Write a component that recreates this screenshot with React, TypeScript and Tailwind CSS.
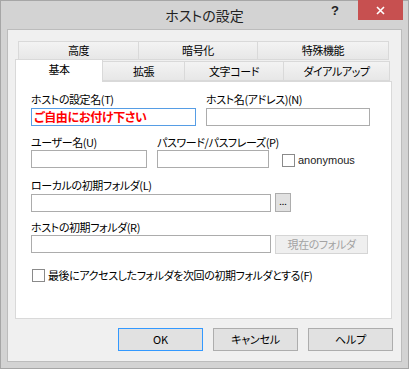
import React from "react";

const Tab: React.FC<{ label: string; w: string; cls?: string }> = ({ label, w, cls }) => (
  <div
    className={`${w} ${cls ?? ""} flex items-center justify-center border border-[#d9d9d9] bg-gradient-to-b from-[#f3f3f3] to-[#e7e7e7] text-[11px] tracking-[-0.4px] leading-none`}
  >
    {label}
  </div>
);

const Field: React.FC<{ w: string; focused?: boolean; children?: React.ReactNode }> = ({ w, focused, children }) => (
  <div
    className={`${w} h-[18px] bg-white border ${
      focused ? "border-[#569de5]" : "border-[#acacac]"
    } flex items-center px-[2px]`}
  >
    {children}
  </div>
);

const Check: React.FC = () => <div className="w-[13px] h-[13px] bg-white border border-[#8a8a8a] shrink-0" />;

const Label: React.FC<{ children: React.ReactNode; cls?: string }> = ({ children, cls }) => (
  <div className={`h-[15px] leading-[15px] text-[11px] tracking-[-0.4px] whitespace-nowrap ${cls ?? ""}`}>{children}</div>
);

const DlgButton: React.FC<{ label: string; primary?: boolean }> = ({ label, primary }) => (
  <button
    className={`w-[85px] h-[23px] bg-[#e1e1e1] border ${
      primary ? "border-[#3399ff]" : "border-[#adadad]"
    } text-[11px] tracking-[-0.2px] leading-none flex items-center justify-center`}
  >
    {label}
  </button>
);

export default function App() {
  return (
    <div className="w-[409px] h-[369px] bg-[#d3d3d3] border border-[#a6a6a6] flex flex-col font-['Noto_Sans_CJK_JP',sans-serif] [font-feature-settings:'palt'] text-black">
      {/* title bar */}
      <div className="h-[28px] flex items-start">
        <div className="w-[78px]" />
        <div className="flex-1 h-[28px] flex items-center justify-center text-[14px] text-[#222]">ホストの設定</div>
        <div className="w-[78px] flex items-start">
          <div className="w-[22px] h-[20px] flex items-center justify-center text-[13px] font-bold text-[#222] font-['Liberation_Sans',sans-serif] -ml-[6px] mr-[12px]">
            ?
          </div>
          <div className="w-[45px] h-[20px] -mt-px bg-[#c75050] flex items-center justify-center">
            <svg width="9" height="9" viewBox="0 0 9 9">
              <path d="M1 1 L8 8 M8 1 L1 8" stroke="#fff" strokeWidth="1.6" />
            </svg>
          </div>
        </div>
      </div>

      {/* client area */}
      <div className="ml-[6px] w-[395px] h-[333px] border border-[#bcbcbc] bg-[#f0f0f0] flex flex-col">
        <div className="ml-[7px] mt-[11px] w-[377px] flex flex-col">
          {/* back row */}
          <div className="ml-[3px] flex">
            <Tab label="高度" w="w-[121px]" cls="h-[19px]" />
            <Tab label="暗号化" w="w-[120px]" cls="h-[19px] -ml-px" />
            <Tab label="特殊機能" w="w-[132px]" cls="h-[19px] -ml-px" />
          </div>
          {/* front row */}
          <div className="flex items-end -mt-px">
            <div className="w-[88px] h-[23px] -mb-px relative z-10 bg-white border border-b-0 border-[#d9d9d9] flex items-center justify-center text-[11px] tracking-[-0.4px] leading-none pb-[3px]">
              基本
            </div>
            <Tab label="拡張" w="w-[83px]" cls="h-[20px] -ml-px" />
            <Tab label="文字コード" w="w-[100px]" cls="h-[20px] -ml-px" />
            <Tab label="ダイアルアップ" w="w-[107px]" cls="h-[20px] -ml-px" />
          </div>

          {/* panel */}
          <div className="h-[238px] bg-white border border-[#d9d9d9] pl-[15px] pt-[10px] flex flex-col">
            {/* row 1 */}
            <div className="flex gap-[10px]">
              <div className="w-[165px] flex flex-col gap-px">
                <Label>ホストの設定名(T)</Label>
                <Field w="w-[165px]" focused>
                  <span className="text-[#ff0000] font-bold text-[12px] tracking-[-0.3px] leading-none">ご自由にお付け下さい</span>
                </Field>
              </div>
              <div className="w-[164px] flex flex-col gap-px">
                <Label>ホスト名(アドレス)(N)</Label>
                <Field w="w-[164px]" />
              </div>
            </div>

            {/* row 2 */}
            <div className="flex gap-[10px] mt-[9px] items-end">
              <div className="w-[116px] flex flex-col">
                <Label>ユーザー名(U)</Label>
                <Field w="w-[116px]" />
              </div>
              <div className="w-[112px] flex flex-col">
                <Label>パスワード/パスフレーズ(P)</Label>
                <Field w="w-[112px]" />
              </div>
              <div className="flex items-center gap-[3px] ml-[3px] mb-px">
                <Check />
                <span className="text-[11px] leading-none font-['Liberation_Sans',sans-serif] text-[#222]">anonymous</span>
              </div>
            </div>

            {/* row 3 */}
            <Label cls="mt-[10px]">ローカルの初期フォルダ(L)</Label>
            <div className="flex items-center gap-[4px]">
              <Field w="w-[240px]" />
              <button className="w-[16px] h-[19px] bg-[#e1e1e1] border border-[#adadad] text-[9px] leading-none flex items-center justify-center pb-[2px]">
                ...
              </button>
            </div>

            {/* row 4 */}
            <Label cls="mt-[8px]">ホストの初期フォルダ(R)</Label>
            <div className="flex items-start gap-[4px]">
              <Field w="w-[240px]" />
              <div className="w-[93px] h-[19px] bg-[#efefef] border border-[#d5d5d5] text-[#a3a3a3] text-[11px] tracking-[-0.4px] leading-none flex items-center justify-center">
                現在のフォルダ
              </div>
            </div>

            {/* checkbox row */}
            <div className="flex items-center gap-[3px] mt-[14px] ml-px">
              <Check />
              <Label>最後にアクセスしたフォルダを次回の初期フォルダとする(F)</Label>
            </div>
          </div>
        </div>

        {/* buttons */}
        <div className="flex gap-[10px] ml-[110px] mt-[9px]">
          <DlgButton label="OK" primary />
          <DlgButton label="キャンセル" />
          <DlgButton label="ヘルプ" />
        </div>
      </div>
    </div>
  );
}
